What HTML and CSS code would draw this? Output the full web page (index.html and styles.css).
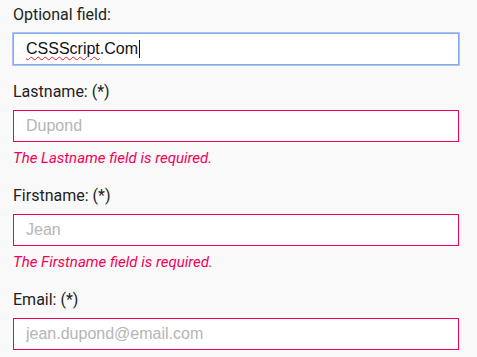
FILE: index.html
```html
<!DOCTYPE html>
<html>
<head>
<meta charset="utf-8">
<link rel="stylesheet" href="styles.css">
</head>
<body>
<form class="form">
  <div class="group">
    <label class="label">Optional field:</label>
    <div class="field focused"><span class="misspelled">CSSScript</span>.Com<span class="caret"></span></div>
  </div>
  <div class="group">
    <label class="label">Lastname: (*)</label>
    <input class="field invalid" type="text" placeholder="Dupond">
    <div class="error">The Lastname field is required.</div>
  </div>
  <div class="group">
    <label class="label">Firstname: (*)</label>
    <input class="field invalid" type="text" placeholder="Jean">
    <div class="error">The Firstname field is required.</div>
  </div>
  <div class="group">
    <label class="label">Email: (*)</label>
    <input class="field invalid" type="text" placeholder="jean.dupond@email.com">
  </div>
</form>
</body>
</html>
```
FILE: styles.css
```css
html, body {
  margin: 0;
  padding: 0;
  background: #f9f9f9;
}
.form {
  width: 446px;
  padding: 6px 0 0 13px;
  display: flex;
  flex-direction: column;
  gap: 18px;
}
.group {
  display: flex;
  flex-direction: column;
}
.label {
  font-family: Roboto, "Liberation Sans", sans-serif;
  font-size: 16px;
  line-height: 18px;
  color: #222;
  margin-bottom: 9px;
}
.field {
  box-sizing: border-box;
  width: 446px;
  height: 32px;
  margin: 0;
  padding: 0 12px;
  border: 1px solid #ccc;
  background: #fff;
  font-family: "Liberation Sans", Arial, sans-serif;
  font-size: 16px;
  color: #111;
  outline: none;
  display: flex;
  align-items: center;
}
.field::placeholder {
  color: #b5b5b5;
}
.focused {
  border-color: #86abea;
  box-shadow: 0 0 0 1px #a9c4f1;
}
.misspelled {
  text-decoration: underline wavy #e02020;
  text-decoration-thickness: 1px;
  text-underline-offset: 2px;
}
.caret {
  display: inline-block;
  width: 1px;
  height: 18px;
  background: #111;
  margin-left: 1px;
}
.invalid {
  border: 1px solid #f50057;
}
.error {
  font-family: Roboto, "Liberation Sans", sans-serif;
  font-style: italic;
  font-size: 15px;
  line-height: 17px;
  color: #f50057;
  margin: 8px 0 2px;
}
```
